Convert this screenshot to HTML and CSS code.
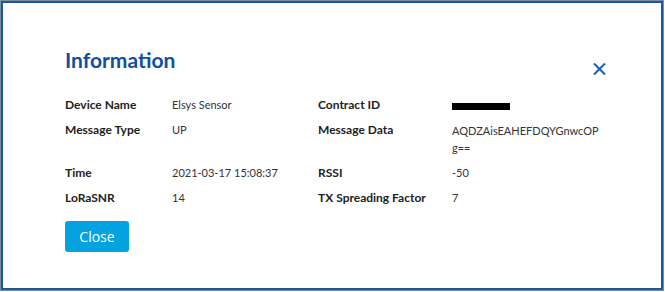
FILE: index.html
```html
<!DOCTYPE html>
<html lang="en">
<head>
    <meta charset="UTF-8">
    <meta name="viewport" content="width=device-width, initial-scale=1.0">
    <title>Information</title>
    <link rel="stylesheet" href="styles.css">
</head>
<body>
    <div id="frame">
        <div id="header">
            <div id="title">Information</div>
            <button id="closeX" aria-label="close">
                <svg width="13" height="12" viewBox="0 0 13 12">
                    <path d="M1 0.5 L12 11.5 M12 0.5 L1 11.5" stroke="#1a5db0" stroke-width="2" fill="none"/>
                </svg>
            </button>
        </div>
        <div id="infoGrid">
            <div class="label">Device Name</div><div class="value">Elsys Sensor</div>
            <div class="label">Contract ID</div><div class="value"><span class="redacted"></span></div>

            <div class="label">Message Type</div><div class="value">UP</div>
            <div class="label">Message Data</div><div class="value wrap">AQDZAisEAHEFDQYGnwcOPg==</div>

            <div class="label">Time</div><div class="value">2021-03-17 15:08:37</div>
            <div class="label">RSSI</div><div class="value">-50</div>

            <div class="label">LoRaSNR</div><div class="value">14</div>
            <div class="label">TX Spreading Factor</div><div class="value">7</div>
        </div>
        <button id="closeBtn">Close</button>
    </div>
</body>
</html>
```

FILE: styles.css
```css
body{
    margin: 0;
    background-color: white;
}
#frame{
    box-sizing: border-box;
    width: 662px;
    height: 289px;
    margin: 1px;
    border: 2px solid #1e56a0;
    box-shadow: 0 0 0 1px #7d8ea3;
    padding: 45px 55px 0 62px;
    font-family: Lato, "Open Sans", sans-serif;
}
#header{
    display: flex;
    justify-content: space-between;
    align-items: flex-start;
}
#title{
    font-size: 21px;
    line-height: 24px;
    font-weight: 700;
    color: #0f4f9e;
}
#closeX{
    margin-top: 15px;
    padding: 0;
    border: 0;
    background: none;
    width: 13px;
    height: 12px;
    display: flex;
}
#infoGrid{
    display: grid;
    grid-template-columns: 107px 146px 134px 152px;
    row-gap: 9px;
    margin-top: 22px;
    line-height: 16px;
}
.label{
    font-size: 12px;
    font-weight: 700;
    color: #222;
}
.value{
    font-size: 11px;
    color: #333;
}
.wrap{
    word-break: break-all;
    line-height: 17px;
}
.redacted{
    display: inline-block;
    width: 58px;
    height: 7px;
    background-color: black;
    vertical-align: middle;
}
#closeBtn{
    margin-top: 15px;
    width: 64px;
    height: 31px;
    border: 0;
    border-radius: 3px;
    background-color: #04a3df;
    color: white;
    font-family: "Open Sans", sans-serif;
    font-size: 14px;
    padding: 0;
}
```
